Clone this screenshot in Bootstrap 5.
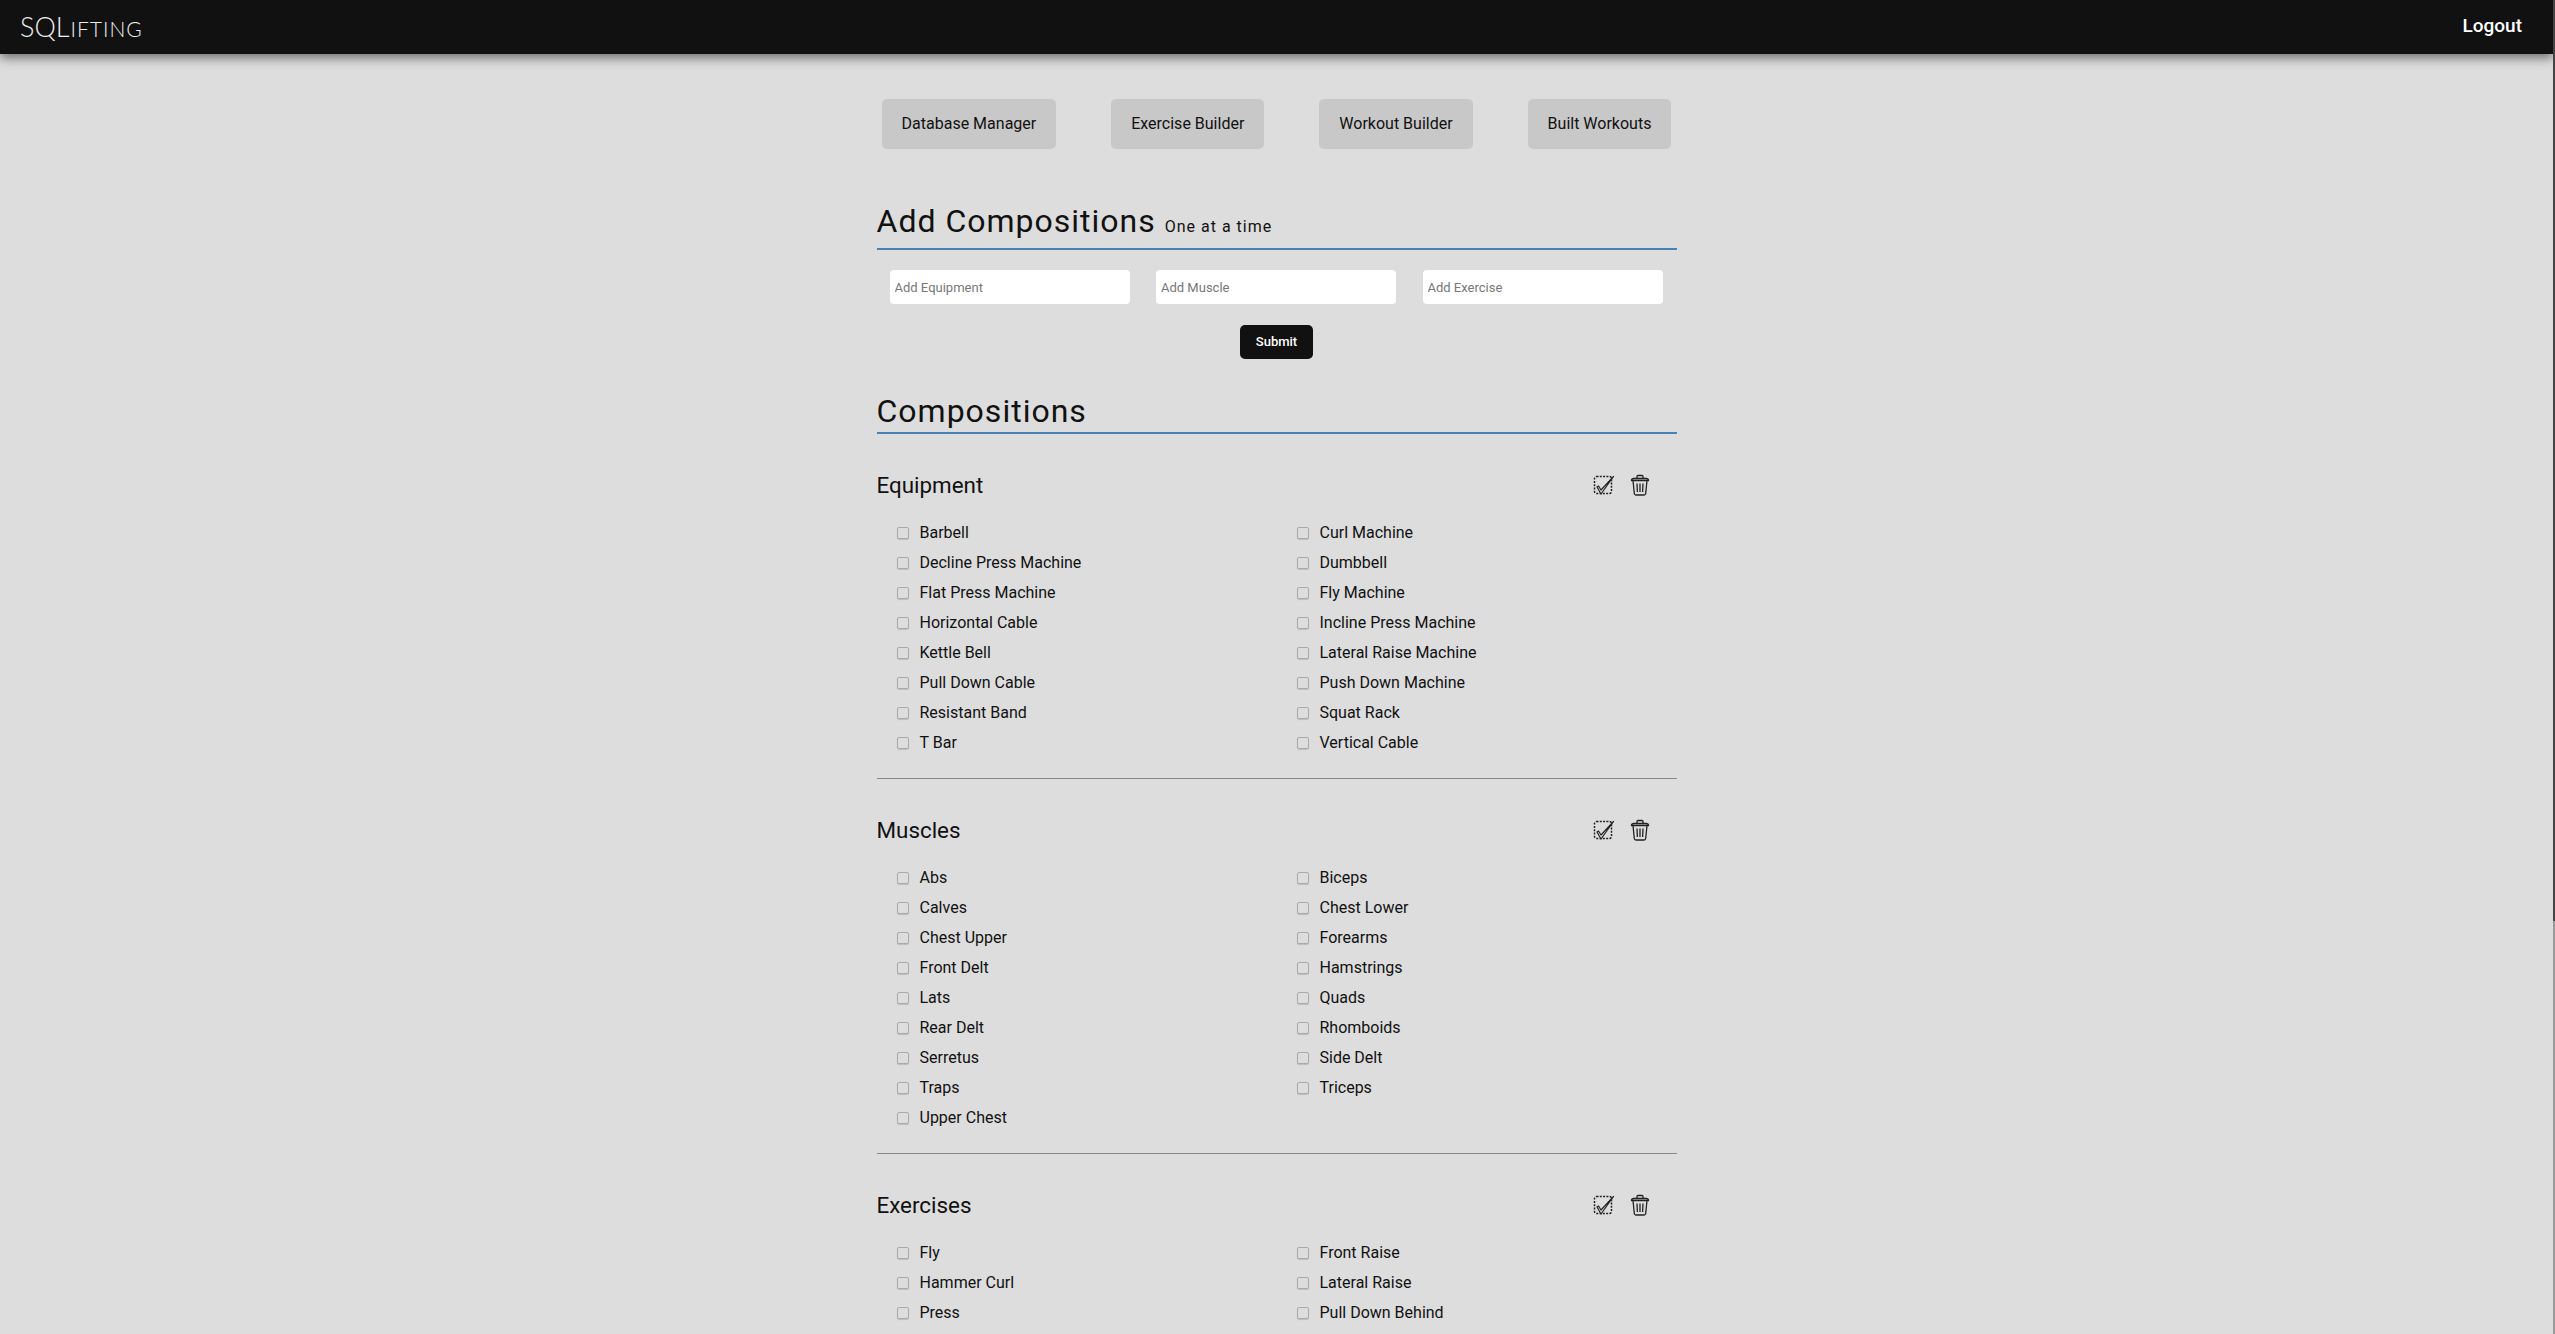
<!DOCTYPE html>
<html lang="en">
<head>
  <meta charset="UTF-8">
  <meta name="viewport" content="width=device-width, initial-scale=1.0">
  <title>SQLifting</title>
  <link href="https://cdn.jsdelivr.net/npm/bootstrap@5.3.0/dist/css/bootstrap.min.css" rel="stylesheet">
  <style>
    body { background-color: #ddd; color: #111; font-family: Roboto, sans-serif; padding-right: 2px; }
    .scroll-track { position: fixed; top: 0; right: 0; bottom: 0; width: 2px; background: #999; }
    .scroll-thumb { height: 921px; background: #444; }
    .top-bar { background: #111; height: 54px; padding: 0 31px 2px 20px; box-shadow: 0 4px 10px rgba(0,0,0,.5); }
    .brand { font-family: Lato, sans-serif; font-weight: 300; font-size: 27px; color: #eee; line-height: 1; }
    .brand-rest { font-size: 21px; letter-spacing: 1px; margin-left: 1px; }
    .logout { color: #fff; font-size: 19px; font-weight: 500; text-decoration: none; }
    .page-wrap { width: 800px; margin: 0 auto; }
    .tab-row { padding: 45px 5px 0; gap: 55px; justify-content: center; }
    .tab-btn { background: #c8c8c8; color: #111; height: 50px; padding: 0 20px; font-size: 16px; border: 0; border-radius: 5px; }
    .sec-head { font-size: 32px; font-weight: 400; letter-spacing: 1px; line-height: 38px; margin: 0; border-bottom: 2px solid #4682b4; padding-bottom: 2px; }
    .sec-head small { font-size: 16px; letter-spacing: 1px; }
    .sec-add { margin-top: 53px; }
    .sec-list { margin-top: 33px; }
    .add-row { padding: 20px 13px 21px; gap: 26.500px; }
    .add-input { width: 240px; height: 34px; border: 0; border-radius: 4px; background: #fff; padding: 0 5px; font-size: 13px; }
    .add-input::placeholder { color: #777; }
    .go-btn { background: #111; color: #fff; width: 73px; height: 34px; font-size: 13px; font-weight: 500; border: 0; border-radius: 5px; padding: 0; }
    .group-head { height: 34px; padding-right: 27px; }
    .group-head h5 { font-size: 22.400px; font-weight: 400; margin: 0; }
    .group-icons { gap: 15px; }
    .first-group { margin-top: 34px; }
    .check-grid { display: grid; grid-template-columns: 400px 1fr; padding-left: 21px; }
    .check-grid label { height: 30px; font-size: 16px; display: flex; align-items: center; }
    .check-grid input { width: 12px; height: 12px; margin: 0 11px 0 -1px; background: #ddd; border: 1px solid #aaa; border-radius: 2px; appearance: none; box-shadow: 0 1px 1px rgba(0,0,0,.15); }
    .group-rule { border: 0; border-top: 1px solid #888; opacity: 1; margin: 20px 0 34px; }
  </style>
</head>
<body>
  <div class="scroll-track"><div class="scroll-thumb"></div></div>
  <nav class="top-bar d-flex align-items-center justify-content-between">
    <span class="brand">SQL<span class="brand-rest">IFTING</span></span>
    <a class="logout" href="#">Logout</a>
  </nav>

  <div class="page-wrap">
    <div class="tab-row d-flex">
      <button class="tab-btn">Database Manager</button>
      <button class="tab-btn">Exercise Builder</button>
      <button class="tab-btn">Workout Builder</button>
      <button class="tab-btn">Built Workouts</button>
    </div>

    <h2 class="sec-head sec-add">Add Compositions <small>One at a time</small></h2>
    <div class="add-row d-flex">
      <input class="add-input" placeholder="Add Equipment">
      <input class="add-input" placeholder="Add Muscle">
      <input class="add-input" placeholder="Add Exercise">
    </div>
    <div class="text-center"><button class="go-btn">Submit</button></div>

    <h2 class="sec-head sec-list">Compositions</h2>

    <div id="groups" class="first-group"></div>
  </div>

  <script>
    // Composition lists, rendered in two columns
    const groups = [
      ['Equipment', ['Barbell','Curl Machine','Decline Press Machine','Dumbbell','Flat Press Machine','Fly Machine','Horizontal Cable','Incline Press Machine','Kettle Bell','Lateral Raise Machine','Pull Down Cable','Push Down Machine','Resistant Band','Squat Rack','T Bar','Vertical Cable']],
      ['Muscles', ['Abs','Biceps','Calves','Chest Lower','Chest Upper','Forearms','Front Delt','Hamstrings','Lats','Quads','Rear Delt','Rhomboids','Serretus','Side Delt','Traps','Triceps','Upper Chest']],
      ['Exercises', ['Fly','Front Raise','Hammer Curl','Lateral Raise','Press','Pull Down Behind']]
    ];
    const icons = `
      <svg width="22" height="22" viewBox="0 0 22 22" fill="none" stroke="#222">
        <rect x="1.500" y="2.500" width="17" height="17" rx="2" stroke-width="1.500" stroke-dasharray="2 1.300"/>
        <path d="M4 13l1.500-1 2.500 4L20.500 2.500 8 20z" fill="#ddd" stroke-width="1.200" stroke-linejoin="round"/>
      </svg>
      <svg width="20" height="22" viewBox="0 0 20 22" fill="none" stroke="#222" stroke-width="1.300">
        <path d="M1.500 6.500c0-1.500 1-2 2.500-2h12c1.500 0 2.500.5 2.500 2zM7 4.500V2.500c0-.7.5-1 1-1h4c.5 0 1 .3 1 1v2"/>
        <path d="M3 6.500l1.300 13c.1 1 .7 1.500 1.700 1.500h8c1 0 1.600-.5 1.700-1.500l1.300-13"/>
        <path d="M7 9.500l.4 8.500M10 9.500V18M13 9.500l-.4 8.500"/>
      </svg>`;
    document.getElementById('groups').innerHTML = groups.map(([name, items], i) => `
      <div class="group-head d-flex align-items-center justify-content-between">
        <h5>${name}</h5>
        <div class="group-icons d-flex align-items-center">${icons}</div>
      </div>
      <div class="check-grid mt-3">
        ${items.map(t => `<label><input type="checkbox">${t}</label>`).join('')}
      </div>
      ${i < 2 ? '<hr class="group-rule">' : ''}`).join('');
  </script>
  <script src="https://cdn.jsdelivr.net/npm/bootstrap@5.3.0/dist/js/bootstrap.bundle.min.js"></script>
</body>
</html>
